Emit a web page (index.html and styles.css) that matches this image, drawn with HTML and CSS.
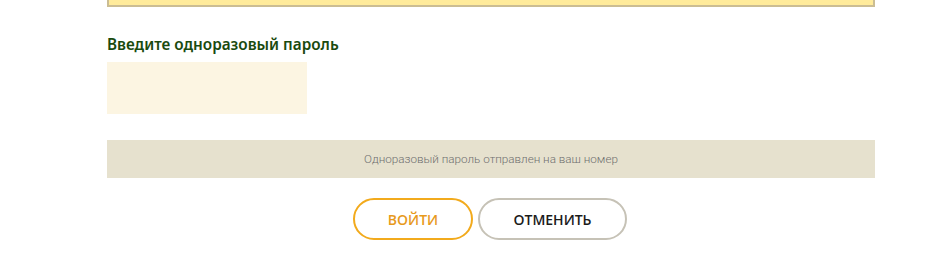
FILE: index.html
```html
<!DOCTYPE html>
<html lang="ru">
<head>
    <meta charset="UTF-8">
    <title>Одноразовый пароль</title>
    <link rel="stylesheet" href="styles.css">
</head>
<body>
    <div class="container">
        <div class="notice"></div>
        <form class="otp-form">
            <label class="otp-label" for="otp">Введите одноразовый пароль</label>
            <input class="otp-input" id="otp" type="text">
            <div class="otp-info">Одноразовый пароль отправлен на ваш номер</div>
            <div class="actions">
                <button type="button" class="btn btn-login">ВОЙТИ</button>
                <button type="button" class="btn btn-cancel">ОТМЕНИТЬ</button>
            </div>
        </form>
    </div>
</body>
</html>
```

FILE: styles.css
```css
body {
    margin: 0;
    padding: 0;
    background-color: #ffffff;
    font-family: "Noto Sans", sans-serif;
}
.container {
    width: 768px;
    margin-left: 107px;
}
.notice {
    height: 5px;
    background-color: #ffeb9b;
    border: 2px solid #cbbd93;
    border-top: none;
}
.otp-form {
    display: flex;
    flex-direction: column;
}
.otp-label {
    margin-top: 27px;
    font-size: 15.3px;
    font-weight: 600;
    color: #1a4a0e;
    line-height: 20px;
}
.otp-input {
    width: 200px;
    height: 52px;
    margin-top: 8px;
    border: none;
    padding: 0 10px;
    box-sizing: border-box;
    background-color: #fcf5e2;
    outline: none;
}
.otp-info {
    margin-top: 26px;
    height: 38px;
    line-height: 38px;
    background-color: #e6e1ce;
    color: #6f6f6f;
    text-align: center;
    font-family: Roboto, sans-serif;
    font-weight: 300;
    font-size: 11.7px;
}
.actions {
    display: flex;
    justify-content: center;
    gap: 5px;
    margin-top: 20px;
    padding-right: 2px;
}
.btn {
    height: 42px;
    border-radius: 21px;
    background-color: #ffffff;
    font-family: "Open Sans", sans-serif;
    font-weight: 600;
    font-size: 14px;
    cursor: pointer;
}
.btn-login {
    width: 120px;
    border: 2px solid #f2aa1c;
    color: #e79a1c;
}
.btn-cancel {
    width: 149px;
    border: 2px solid #c6c2b6;
    color: #1b1b1b;
}
```
